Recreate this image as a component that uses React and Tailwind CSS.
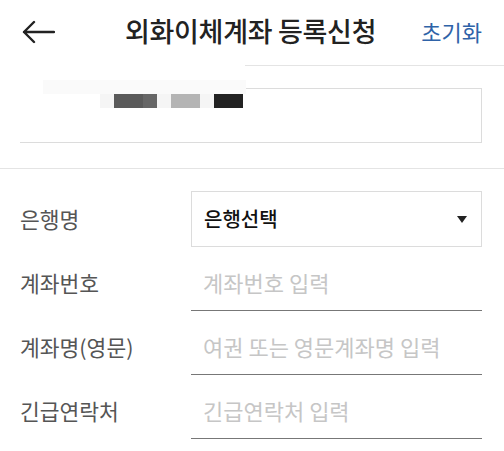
import React from "react";

const font = { fontFamily: '"Noto Sans CJK KR", "Noto Sans", sans-serif' };

function Row({ label, children }) {
  return (
    <div className="flex items-center">
      <div className="w-[191px] shrink-0 pl-5 text-[21.5px] text-[#555]">{label}</div>
      <div className="w-[291px]">{children}</div>
    </div>
  );
}

function Input({ placeholder }) {
  return (
    <div className="flex h-[56px] items-center border-b border-[#777] pl-3 text-[22px] text-[#c6c6c6]">
      {placeholder}
    </div>
  );
}

export default function App() {
  return (
    <div className="relative h-[451px] w-[504px] overflow-hidden bg-white" style={font}>
      {/* header */}
      <div className="flex h-[66px] items-center border-b border-[#e4e4e4] px-5">
        <svg width="34" height="24" viewBox="0 0 34 24" className="ml-[1px] mt-[-2px] shrink-0">
          <path d="M33 12H3M13 2L3 12l10 10" fill="none" stroke="#222" strokeWidth="2.4" strokeLinecap="round" strokeLinejoin="round" />
        </svg>
        <div className="flex-1 pl-[70px] text-[27px] font-medium tracking-[-0.3px] text-[#222] mt-[-2px] whitespace-nowrap">외화이체계좌 등록신청</div>
        <div className="mr-[2px] text-[22px] text-[#2f63a8] mt-[-2px] whitespace-nowrap">초기화</div>
      </div>

      {/* masked account box */}
      <div className="px-5 pt-[22px] pb-[25px] border-b border-[#e4e4e4]">
        <div className="h-[55px] w-[462px] border border-[#dcdcdc]" />
      </div>

      {/* privacy mask overlay */}
      <div className="absolute left-0 top-[63px] h-[79px] w-[245px] bg-white">
        <div className="ml-[43px] mt-[17px] h-[14px] w-[203px] bg-[#fafafa]" />
        <div className="ml-[100px] flex h-[14px]">
          <div className="w-[14px] bg-[#f5f5f5]" />
          <div className="w-[29px] bg-[#5a5a5a]" />
          <div className="w-[14px] bg-[#666]" />
          <div className="w-[14px] bg-[#f5f5f5]" />
          <div className="w-[29px] bg-[#b4b4b4]" />
          <div className="w-[14px] bg-[#f5f5f5]" />
          <div className="w-[29px] bg-[#222]" />
        </div>
      </div>

      {/* form */}
      <div className="flex flex-col gap-[8px] pt-[22px]">
        <Row label="은행명">
          <div className="flex h-[56px] items-center justify-between border border-[#dcdcdc] pl-3 pr-[14px]">
            <span className="text-[20px] font-medium text-[#111]">은행선택</span>
            <svg width="10" height="7" viewBox="0 0 10 7">
              <path d="M0 0h10L5 7z" fill="#222" />
            </svg>
          </div>
        </Row>
        <Row label="계좌번호">
          <Input placeholder="계좌번호 입력" />
        </Row>
        <Row label="계좌명(영문)">
          <Input placeholder="여권 또는 영문계좌명 입력" />
        </Row>
        <Row label="긴급연락처">
          <Input placeholder="긴급연락처 입력" />
        </Row>
      </div>
    </div>
  );
}
